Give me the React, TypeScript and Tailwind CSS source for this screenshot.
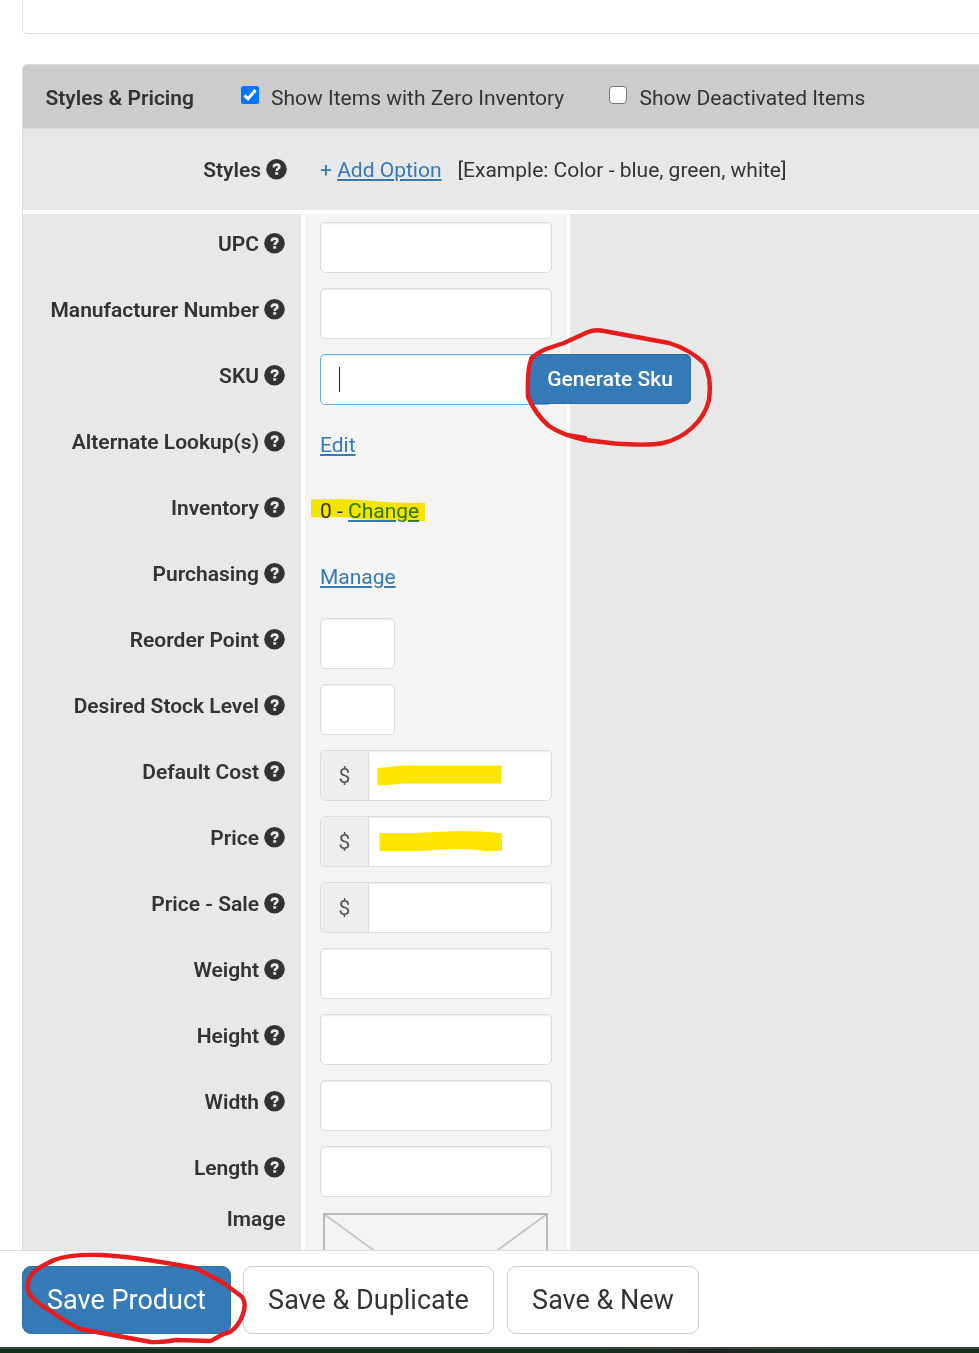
import type { ReactNode } from "react";

function HelpIcon() {
  return (
    <svg width="21" height="21" viewBox="0 0 21 21" className="shrink-0">
      <circle cx="10.5" cy="10.3" r="10.3" fill="#333" />
      <path d="M7.9 8.3Q7.7 5.6 10.6 5.6Q13.4 5.6 13.4 7.7Q13.4 8.9 12.1 9.6Q10.7 10.3 10.7 11.9" fill="none" stroke="#e8e8e8" strokeWidth="2.6" />
      <rect x="9.2" y="13.2" width="3" height="2.5" fill="#e8e8e8" />
    </svg>
  );
}

function Label({ text }: { text: string }) {
  return (
    <div className="flex h-[66px] items-start justify-end gap-[5px] pt-[19px] pr-4 leading-[21px] font-semibold">
      <span className="pt-px">{text}</span>
      <HelpIcon />
    </div>
  );
}

function Cell({ children }: { children?: ReactNode }) {
  return <div className="flex h-[66px] items-start pt-2">{children}</div>;
}

function Field({ small = false }: { small?: boolean }) {
  return (
    <div
      className={`h-[51px] rounded-[5px] border border-[#dcdcdc] bg-white shadow-[inset_0_1px_2px_rgba(0,0,0,0.075)] ${small ? "w-[75px]" : "w-[232px]"}`}
    />
  );
}

function Link({ children }: { children: ReactNode }) {
  return <a className="text-[#337ab7] underline">{children}</a>;
}

function Money({ mark }: { mark?: ReactNode }) {
  return (
    <div className="flex h-[51px] w-[232px] overflow-hidden rounded-[5px] border border-[#dcdcdc] bg-white">
      <div className="flex w-[48px] items-center justify-center border-r border-[#dcdcdc] bg-[#eee] text-[#555]">$</div>
      <div className="flex-1 shadow-[inset_0_1px_2px_rgba(0,0,0,0.075)]">{mark}</div>
    </div>
  );
}

const labels = [
  "UPC", "Manufacturer Number", "SKU", "Alternate Lookup(s)", "Inventory",
  "Purchasing", "Reorder Point", "Desired Stock Level", "Default Cost", "Price",
  "Price - Sale", "Weight", "Height", "Width", "Length",
];

export default function App() {
  return (
    <div className="relative flex h-[1353px] w-[979px] flex-col overflow-hidden bg-white font-['Roboto',sans-serif] text-[21px] leading-[30px] text-[#333]">
      <div className="ml-[22px] h-[34px] shrink-0 rounded-bl-[5px] border-b border-l border-[#dcdcdc]" />

      <main className="mt-[30px] ml-[22px] flex min-h-0 flex-1 flex-col overflow-hidden rounded-tl-[5px] border-t border-l border-[#dcdcdc]">
        <header className="flex h-[64px] shrink-0 items-center border-b border-[#d9d9d9] bg-[#ccc] pl-[22.500px]">
          <span className="w-[195.500px] shrink-0 pt-[2px] font-semibold">Styles &amp; Pricing</span>
          <svg width="18" height="18" viewBox="0 0 18 18" className="-mt-[3px] shrink-0">
            <rect width="18" height="18" rx="2.5" fill="#0075ff" />
            <path d="M3.4 9.3L7.1 12.800L14.5 4" fill="none" stroke="#fff" strokeWidth="3.1" />
          </svg>
          <span className="w-[350px] shrink-0 pt-[2px] pl-3">Show Items with Zero Inventory</span>
          <span className="-mt-[3px] size-[18px] shrink-0 rounded-[4px] border-[1.5px] border-[#767676] bg-white" />
          <span className="pt-[2px] pl-[12.500px]">Show Deactivated Items</span>
        </header>

        <div className="flex h-[81px] shrink-0 items-center bg-[#e8e8e8]">
          <div className="flex w-[264px] items-center justify-end gap-[5px] font-semibold">
            <span>Styles</span>
            <HelpIcon />
          </div>
          <div className="flex pl-[33px]">
            <span className="text-[#337ab7]">+ <Link>Add Option</Link></span>
            <span className="pl-[16px]">[Example: Color - blue, green, white]</span>
          </div>
        </div>

        <div className="mt-1 flex min-h-0 flex-1 overflow-hidden">
          <div className="w-[278px] shrink-0 bg-[#e8e8e8]">
            {labels.map((l) => <Label key={l} text={l} />)}
            <div className="pr-[15.500px] text-right font-semibold">Image</div>
          </div>
          <div className="ml-1 w-[262px] shrink-0 bg-[#f4f4f4] pl-[15px]">
            <Cell><Field /></Cell>
            <Cell><Field /></Cell>
            <Cell>
              <div className="relative h-[51px] w-[232px] rounded-[5px] border border-[#66afe9] bg-white pt-[12px] pl-[18px] shadow-[inset_0_1px_2px_rgba(0,0,0,0.075)]">
                <div className="h-[25px] w-px bg-[#222]" />
                <button className="absolute -top-px left-[208px] h-[50px] w-[162px] rounded-[5px] border border-[#2e6da4] bg-[#337ab7] font-medium text-white">
                  Generate Sku
                </button>
              </div>
            </Cell>
            <Cell><div className="pt-[10px]"><Link>Edit</Link></div></Cell>
            <Cell>
              <div className="relative pt-[10px]">
                <span>0 - </span><Link>Change</Link>
                <svg className="absolute top-[12px] -left-[9px] mix-blend-multiply" width="115" height="24" viewBox="0 0 115 24">
                  <path d="M0 0.5L29 0L42 .5L82 3.5L114 4V22L82 21.5L46 20L29 18L6 18.500L0 18Z" transform="translate(0 1)" fill="#fff000" />
                </svg>
              </div>
            </Cell>
            <Cell><div className="pt-[10px]"><Link>Manage</Link></div></Cell>
            <Cell><Field small /></Cell>
            <Cell><Field small /></Cell>
            <Cell>
              <Money mark={
                <svg width="180" height="49"><path d="M8.5 17L19 16.3Q28 14.5 35 14.5H132.500V32.500H35L21 33.800L8.500 34.500Z" fill="#ffe600" /></svg>
              } />
            </Cell>
            <Cell>
              <Money mark={
                <svg width="180" height="49"><path d="M10.500 16H46Q64 15 90 14Q110 14 133 16.200V34H118Q102 32 90 32Q65 33.200 52 34H10.500Z" fill="#ffe600" /></svg>
              } />
            </Cell>
            <Cell><Money /></Cell>
            <Cell><Field /></Cell>
            <Cell><Field /></Cell>
            <Cell><Field /></Cell>
            <Cell><Field /></Cell>
            <svg width="225" height="165" viewBox="0 0 225 165" className="mt-[9px] ml-[3px]">
              <path d="M1 1L224 164M224 1L1 164" stroke="#c8c8c8" strokeWidth="2" />
              <rect x="1" y="1" width="223" height="163" fill="none" stroke="#aaa" strokeWidth="1.6" />
            </svg>
          </div>
          <div className="ml-[3px] flex-1 bg-[#e8e8e8]" />
        </div>
      </main>

      <footer className="flex h-[97px] shrink-0 items-start border-t border-[#dcdcdc] bg-white pt-[15px] pl-[22px] text-[27px]">
        <button className="h-[68px] w-[209px] rounded-[9px] border border-[#2e6da4] bg-[#337ab7] text-white">Save Product</button>
        <button className="ml-[12px] h-[68px] w-[251px] rounded-[9px] border border-[#ccc] bg-white">Save &amp; Duplicate</button>
        <button className="ml-[13px] h-[68px] w-[192px] rounded-[9px] border border-[#ccc] bg-white">Save &amp; New</button>
      </footer>
      <div className="h-[6px] shrink-0 border-t-2 border-[#3a4940] bg-[linear-gradient(to_right,#142e1e_0%,#142e1e_62%,#1d211f_72%,#1b2a20_80%,#142e1a_88%,#142e1a_100%)]" />

      <svg width="979" height="1353" className="pointer-events-none absolute inset-0" fill="none" stroke="#e71d1d" strokeWidth="4.4" strokeLinecap="round" strokeLinejoin="round">
        <path d="M531 360C534 355 539 352 546 349L564 343L588 332Q595 329 604 331L669 343Q689 349 704 363Q712 377 709 400C704 421 685 438 663 443Q648 446 615 443.500L585 440Q562 435 549 426Q536 415 528 397Q527 370 531 360M567 435L585 438" />
        <path d="M32 1274C37 1267 45 1265 54 1260Q70 1254 101 1255Q130 1256 195 1268L222 1282L241 1296Q247 1302 243 1314Q239 1326 230 1332C220 1334 213 1341 210 1341L176 1340Q164 1342.500 151 1342Q130 1338 80 1329Q67 1323 49 1310Q30 1299 28 1290Q27 1280 32 1274M175 1340H180" />
      </svg>
    </div>
  );
}
